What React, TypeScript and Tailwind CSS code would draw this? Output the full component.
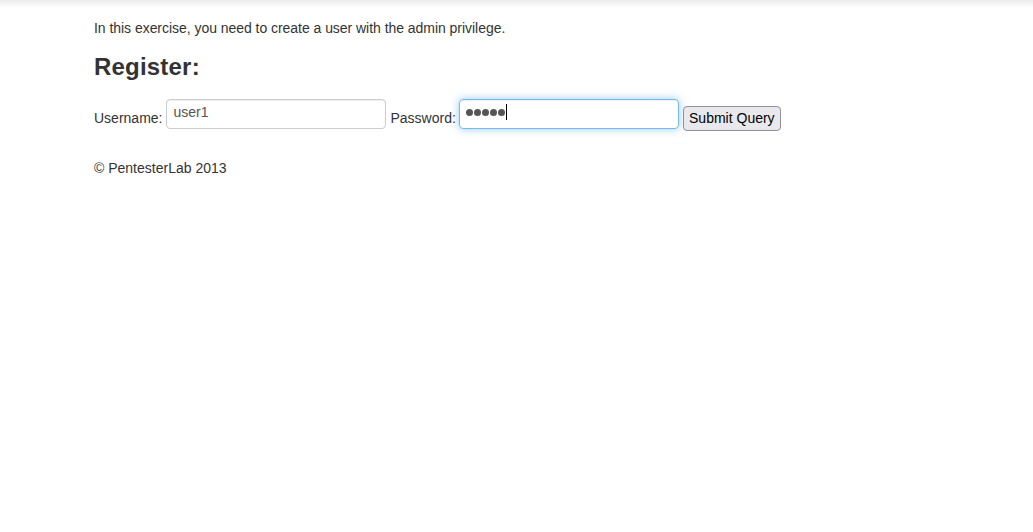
export default function App() {
  return (
    <div className="min-h-[532px] bg-white font-['Liberation_Sans',Arial,sans-serif] text-[14px] leading-5 text-[#333]">
      <div className="h-[8px] bg-gradient-to-b from-[#ececec] to-white" />
      <div className="pl-[94px]">
        <p className="mt-[10px] tracking-[-0.04px]">
          In this exercise, you need to create a user with the admin privilege.
        </p>
        <h2 className="mt-[11px] text-[24px] font-bold leading-[36px] tracking-[0.2px]">Register:</h2>

        <form className="mt-[14px] flex items-center" onSubmit={(e) => e.preventDefault()}>
          <label htmlFor="username" className="mb-[2px] mr-[4px]">
            Username:
          </label>
          <input
            id="username"
            type="text"
            defaultValue="user1"
            className="mb-[10px] box-border h-[30px] w-[220px] rounded-[4px] border border-[#ccc] px-[6px] pb-[6px] pt-[2px] text-[14px] leading-5 text-[#555] shadow-[inset_0_1px_1px_rgba(0,0,0,0.075)] outline-none"
          />
          <label htmlFor="password" className="mb-[2px] ml-[4px] mr-[3px]">
            Password:
          </label>
          <div
            id="password"
            role="textbox"
            className="mb-[10px] box-border flex h-[30px] w-[220px] items-center rounded-[4px] border border-[rgba(82,168,236,0.8)] px-[6px] pb-[4px] text-[#555] shadow-[inset_0_1px_1px_rgba(0,0,0,0.075),0_0_8px_rgba(82,168,236,0.6)]"
          >
            <span className="flex gap-[1px]">
              {[0, 1, 2, 3, 4].map((i) => (
                <span key={i} className="h-[7px] w-[7px] rounded-full bg-[#555]" />
              ))}
            </span>
            <span className="ml-[1px] h-[16px] w-[1px] bg-black" />
          </div>
          <button
            type="submit"
            className="mb-[2px] ml-[4px] box-border h-[25px] w-[98px] rounded-[4px] border border-[#8f8f9d] bg-[#e9e9ed] text-[14px] leading-5 text-black"
          >
            Submit Query
          </button>
        </form>

        <footer className="mt-[19px]">
          <p>© PentesterLab 2013</p>
        </footer>
      </div>
    </div>
  );
}
